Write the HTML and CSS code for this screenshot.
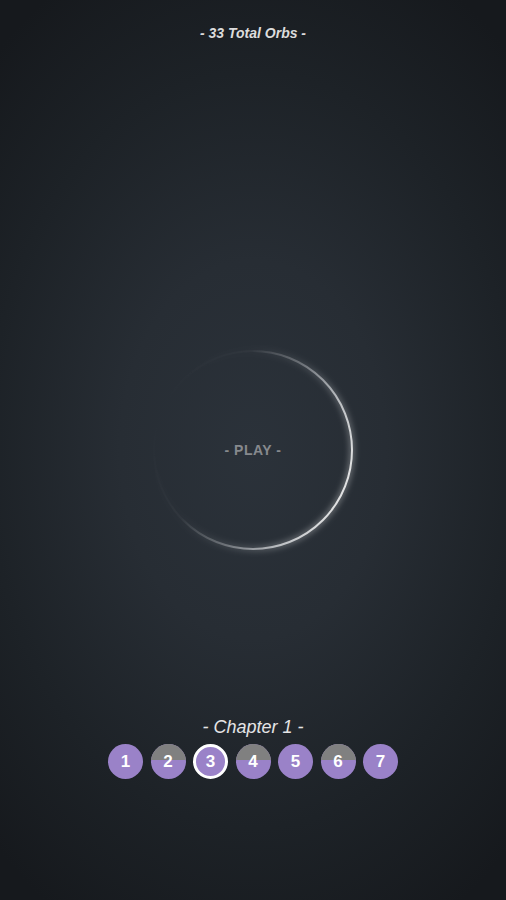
FILE: index.html
```html
<!DOCTYPE html>
<html>
<head>
<meta charset="utf-8">
<link rel="stylesheet" href="styles.css">
</head>
<body>
<div class="screen">
  <header class="top">- 33 Total Orbs -</header>
  <main class="stage">
    <div class="orb">
      <svg class="ring" width="220" height="220" viewBox="0 0 220 220">
        <defs>
          <linearGradient id="rg" x1="0.05" y1="0.25" x2="1" y2="0.65">
            <stop offset="0" stop-color="#ffffff" stop-opacity="0"/>
            <stop offset="0.3" stop-color="#ffffff" stop-opacity="0.03"/>
            <stop offset="0.55" stop-color="#e8eaee" stop-opacity="0.3"/>
            <stop offset="0.8" stop-color="#eef0f2" stop-opacity="0.7"/>
            <stop offset="1" stop-color="#f4f4f4" stop-opacity="0.9"/>
          </linearGradient>
          <filter id="glow" x="-20%" y="-20%" width="140%" height="140%">
            <feGaussianBlur stdDeviation="3" result="b"/>
            <feMerge><feMergeNode in="b"/><feMergeNode in="SourceGraphic"/></feMerge>
          </filter>
        </defs>
        <circle cx="110" cy="110" r="99" fill="none" stroke="url(#rg)" stroke-width="2" filter="url(#glow)"/>
      </svg>
      <span class="play">- PLAY -</span>
    </div>
  </main>
  <footer class="chapter">
    <div class="chapter-title">- Chapter 1 -</div>
    <div class="levels">
      <div class="lvl">1</div>
      <div class="lvl half"><span class="fill"></span><span class="num">2</span></div>
      <div class="lvl current">3</div>
      <div class="lvl half"><span class="fill"></span><span class="num">4</span></div>
      <div class="lvl">5</div>
      <div class="lvl half"><span class="fill"></span><span class="num">6</span></div>
      <div class="lvl">7</div>
    </div>
  </footer>
</div>
</body>
</html>
```
FILE: styles.css
```css
html, body {
  margin: 0;
  padding: 0;
}
body {
  width: 506px;
  height: 900px;
  overflow: hidden;
  font-family: "Liberation Sans", Arial, sans-serif;
  background: radial-gradient(ellipse 75% 60% at 50% 50%, #2b323a 0%, #272d34 35%, #1d2227 70%, #16191d 100%);
  background-color: #16191d;
}
.screen {
  height: 900px;
  display: flex;
  flex-direction: column;
  align-items: center;
}
.top {
  padding-top: 24px;
  font-size: 14px;
  line-height: 18px;
  font-weight: bold;
  font-style: italic;
  color: #dcdcdc;
}
.stage {
  margin-top: 298px;
  display: flex;
  justify-content: center;
}
.orb {
  position: relative;
  width: 220px;
  height: 220px;
  display: flex;
  align-items: center;
  justify-content: center;
}
.ring {
  position: absolute;
  left: 0;
  top: 0;
}
.play {
  position: relative;
  font-size: 14px;
  font-weight: bold;
  letter-spacing: 0.5px;
  color: #86898d;
}
.chapter {
  margin-top: 156px;
  display: flex;
  flex-direction: column;
  align-items: center;
}
.chapter-title {
  font-size: 18px;
  line-height: 22px;
  font-style: italic;
  color: #e4e4e6;
}
.levels {
  margin-top: 6px;
  display: flex;
  gap: 7.5px;
}
.lvl {
  position: relative;
  overflow: hidden;
  width: 35px;
  height: 35px;
  border-radius: 50%;
  box-sizing: border-box;
  background-color: #9a82c8;
  color: #ffffff;
  font-weight: bold;
  font-size: 17px;
  display: flex;
  align-items: center;
  justify-content: center;
}
.lvl .fill {
  position: absolute;
  left: 0;
  top: 0;
  width: 100%;
  height: 45%;
  background-color: #808080;
}
.lvl .num {
  position: relative;
}
.lvl.current {
  border: 3px solid #ffffff;
}
```
